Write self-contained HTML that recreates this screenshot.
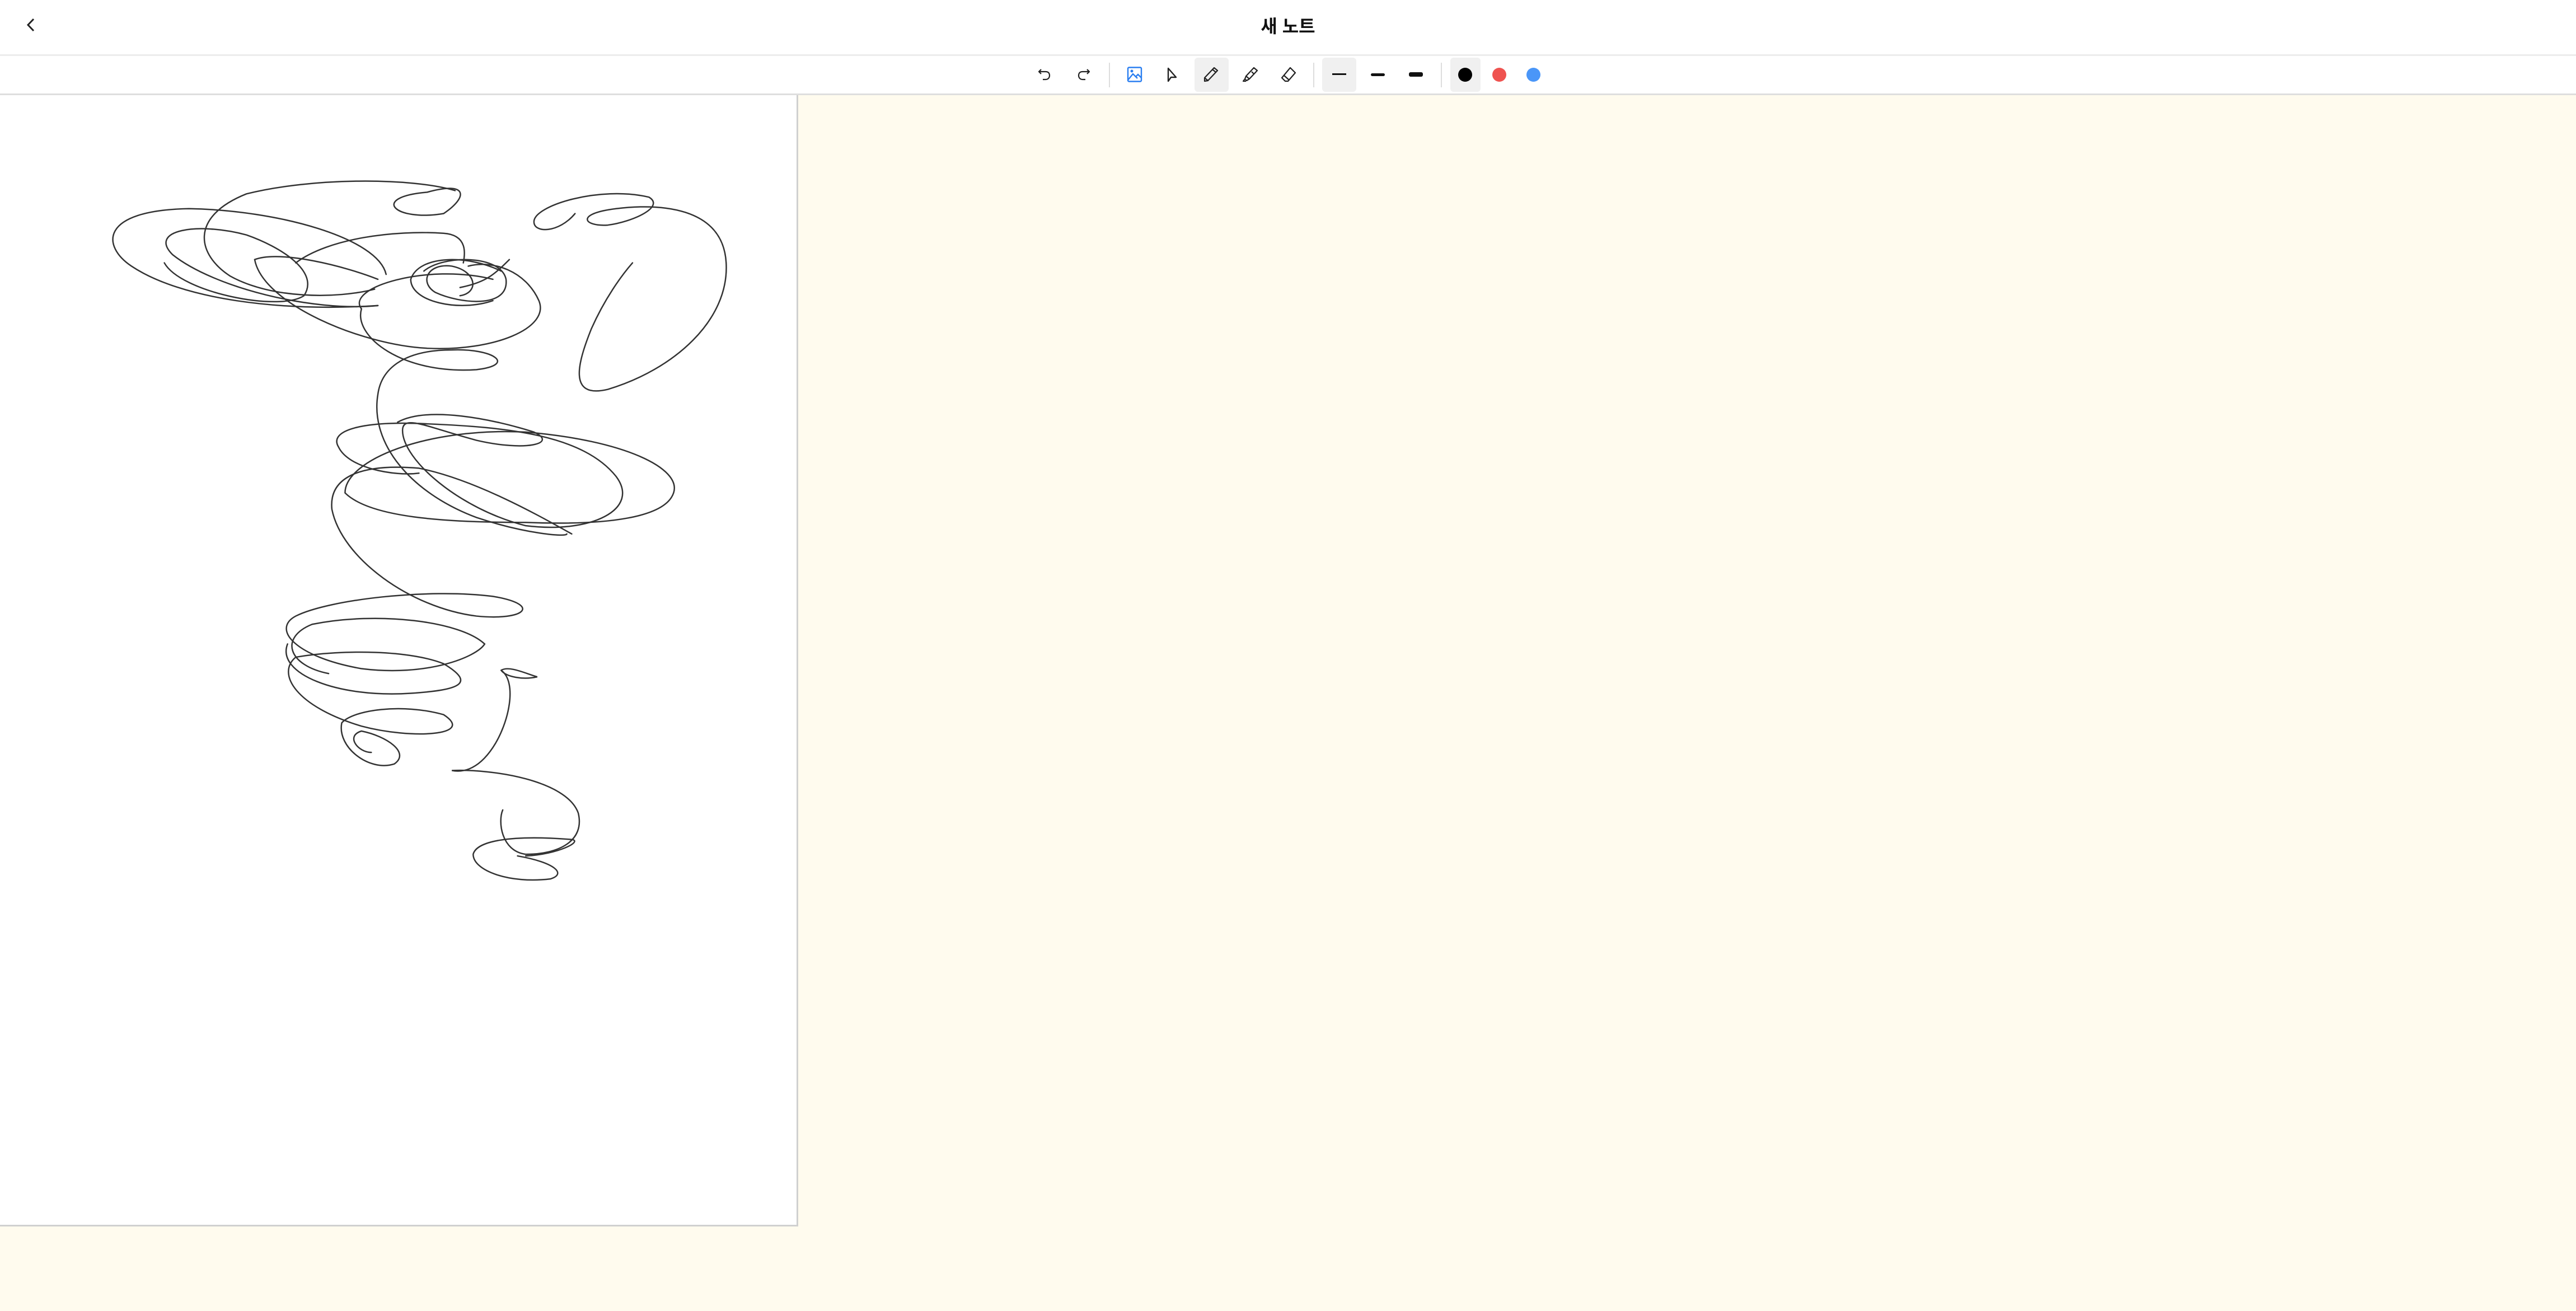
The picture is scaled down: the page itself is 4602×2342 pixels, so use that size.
<!DOCTYPE html>
<html><head><meta charset="utf-8"><style>
html,body{margin:0;padding:0;width:4602px;height:2342px;overflow:hidden;background:#fffbee;font-family:"Liberation Sans","Noto Sans CJK KR",sans-serif}
#hdr{position:absolute;left:0;top:0;width:4602px;height:97px;background:#fff;border-bottom:3px solid #ececec}
#title{position:absolute;left:0;width:4602px;top:22px;text-align:center;font-size:32px;font-weight:bold;color:#111}
#tb{position:absolute;left:0;top:100px;width:4602px;height:67px;background:#fff;border-bottom:3px solid #dedede}
.bg{position:absolute;top:3px;height:61px;background:#f0f0f0;border-radius:6px}
.sep{position:absolute;top:12px;width:2px;height:44px;background:#ddd}
.dot{position:absolute;width:25px;height:25px;border-radius:50%;top:21px}
#paper{position:absolute;left:0;top:170px;width:1423px;height:2018px;background:#fff;border-right:3px solid #d0d0d0;border-bottom:3px solid #d0d0d0}
svg{position:absolute}
</style></head><body>
<div id="hdr">
<svg style="left:40px;top:30px" width="30" height="30" viewBox="0 0 30 30"><path d="M20 4 L10 14.5 L20 25" fill="none" stroke="#222" stroke-width="3"/></svg>
<div id="title">새 노트</div>
</div>
<div id="tb">
<div class="sep" style="left:1981px"></div>
<div class="bg" style="left:2134px;width:61px"></div>
<div class="sep" style="left:2346px"></div>
<div class="bg" style="left:2362px;width:61px"></div>
<div class="sep" style="left:2574px"></div>
<div class="bg" style="left:2591px;width:54px"></div>
<svg style="left:1851px;top:118px;top:18px" width="30" height="30" viewBox="0 0 30 30" fill="none" stroke="#222" stroke-width="2.2" stroke-linejoin="round"><path d="M9 6 L5 10 L9 14"/><path d="M5 10 H17 C22 10 24 13 24 17 C24 21 21 24 17 24 H12"/></svg>
<svg style="left:1921px;top:18px" width="30" height="30" viewBox="0 0 30 30" fill="none" stroke="#222" stroke-width="2.2" stroke-linejoin="round"><path d="M21 6 L25 10 L21 14"/><path d="M25 10 H13 C8 10 6 13 6 17 C6 21 9 24 13 24 H18"/></svg>
<svg style="left:2012px;top:18px" width="30" height="30" viewBox="0 0 30 30" fill="none" stroke="#2a7ef0" stroke-width="2.4"><rect x="3" y="2.5" width="24" height="25" rx="2"/><circle cx="10" cy="9" r="1.3" fill="#2a7ef0"/><path d="M3 25 L12 14 L20 22 M17 19 L21 15 L27 21"/></svg>
<svg style="left:2078px;top:18px" width="30" height="30" viewBox="0 0 30 30" fill="none" stroke="#222" stroke-width="2.4" stroke-linejoin="round"><path d="M9 4 L9 27 L14 20 L23 20 Z"/></svg>
<svg style="left:2148px;top:18px" width="30" height="30" viewBox="0 0 30 30" fill="none" stroke="#222" stroke-width="2.2" stroke-linejoin="round"><path d="M21 3 L27 8 L10 26 L4 27 L4 21 Z M18 6 L24 11 M4 21 L10 26"/></svg>
<svg style="left:2218px;top:18px" width="30" height="30" viewBox="0 0 30 30" fill="none" stroke="#222" stroke-width="2.2" stroke-linejoin="round"><path d="M22 3 L28 8 L14 23 L8 18 Z M8 18 L6 23 L9 26 L14 23 M6 23 L3 27 L8 27 M18 10 L22 14"/></svg>
<svg style="left:2286px;top:18px" width="30" height="30" viewBox="0 0 30 30" fill="none" stroke="#222" stroke-width="2.2" stroke-linejoin="round"><path d="M19 3 L28 12 L15 27 L10 27 L4 21 Z M7 16 L17 25"/></svg>
<div style="position:absolute;left:2380px;top:31px;width:25px;height:3px;background:#111"></div>
<div style="position:absolute;left:2449px;top:31px;width:25px;height:5px;border-radius:3px;background:#111"></div>
<div style="position:absolute;left:2517px;top:29px;width:25px;height:8px;border-radius:3px;background:#111"></div>
<div class="dot" style="left:2605px;background:#000"></div>
<div class="dot" style="left:2666px;background:#ef5350"></div>
<div class="dot" style="left:2727px;background:#4a96f8"></div>
</div>
<div id="paper"></div>
<svg style="left:0;top:0" width="4602" height="2342" viewBox="0 0 1568 798" fill="none" stroke="#333" stroke-width="0.85" stroke-linecap="round">
<path d="M235 167 C230 145 170 128 115 127 C60 128 62 150 80 162 C110 182 170 190 230 186"/>
<path d="M230 186 C190 190 130 175 105 155 C90 140 120 135 150 143 C170 150 195 165 185 180 C170 190 110 178 100 160"/>
<path d="M270 130 C240 135 225 120 260 117 C285 110 285 120 270 130 Z"/>
<path d="M277 116 C250 108 190 108 150 118 C115 132 120 155 140 168 C165 182 205 182 228 176"/>
<path d="M155 158 C170 152 210 162 230 170"/>
<path d="M155 158 C160 185 220 210 260 212 C300 214 335 200 328 183 C320 165 300 158 285 162"/>
<path d="M180 160 C200 145 240 140 270 142 C285 143 283 155 282 160"/>
<path d="M300 183 C280 190 250 184 250 170 C255 155 285 155 305 165"/>
<path d="M258 165 C270 155 305 155 308 170 C310 188 280 185 265 178 C255 172 260 160 275 162 C290 165 292 178 280 180"/>
<path d="M220 188 C210 175 260 160 300 170"/>
<path d="M220 188 C215 205 245 228 290 225 C315 222 300 212 275 213 C245 213 232 225 230 240 C225 270 250 300 290 315 C320 325 345 327 345 325"/>
<path d="M310 158 C300 168 295 172 280 175"/>
<path d="M350 130 C340 142 325 142 325 135 C325 125 365 113 395 120 C405 126 385 135 370 137 C355 138 350 130 375 127 C400 124 440 125 442 160 C444 195 410 225 370 237 C345 243 352 220 360 200 C368 182 378 168 385 160"/>
<path d="M348 325 C330 315 290 292 255 285 C220 282 200 290 202 310 C208 340 250 370 290 375 C320 378 330 368 300 363 C260 358 200 365 180 375 C165 383 180 400 220 407 C260 412 290 400 295 392 C280 378 230 372 190 380 C170 388 175 405 200 410"/>
<path d="M242 257 C260 247 300 255 325 263 C340 270 320 275 290 268 C260 260 245 252 245 262 C245 280 280 310 320 320 C360 325 390 310 375 290 C355 265 310 260 260 258 C220 256 200 262 206 272 C212 285 240 290 255 288"/>
<path d="M210 300 C210 280 260 260 320 263 C380 268 415 285 410 300 C405 315 370 320 320 318 C270 318 225 315 210 300"/>
<path d="M175 392 C168 410 205 425 250 422 C280 420 290 416 270 404 C250 396 210 395 180 400 C168 410 180 430 220 442 C250 450 290 448 270 435 C245 428 215 432 208 440 C205 455 225 470 240 465 C250 458 235 448 220 445 C210 448 218 458 226 458"/>
<path d="M305 408 C310 405 320 410 327 412 C318 414 308 412 305 408 C315 415 310 440 300 455 C290 470 280 470 275 469 C300 468 345 475 352 495 C356 512 340 520 320 520 C305 518 303 500 306 493"/>
<path d="M320 521 C340 520 355 512 348 511 C310 508 290 512 288 520 C288 530 310 538 335 535 C345 532 338 525 315 521"/>
</svg>
</body></html>
